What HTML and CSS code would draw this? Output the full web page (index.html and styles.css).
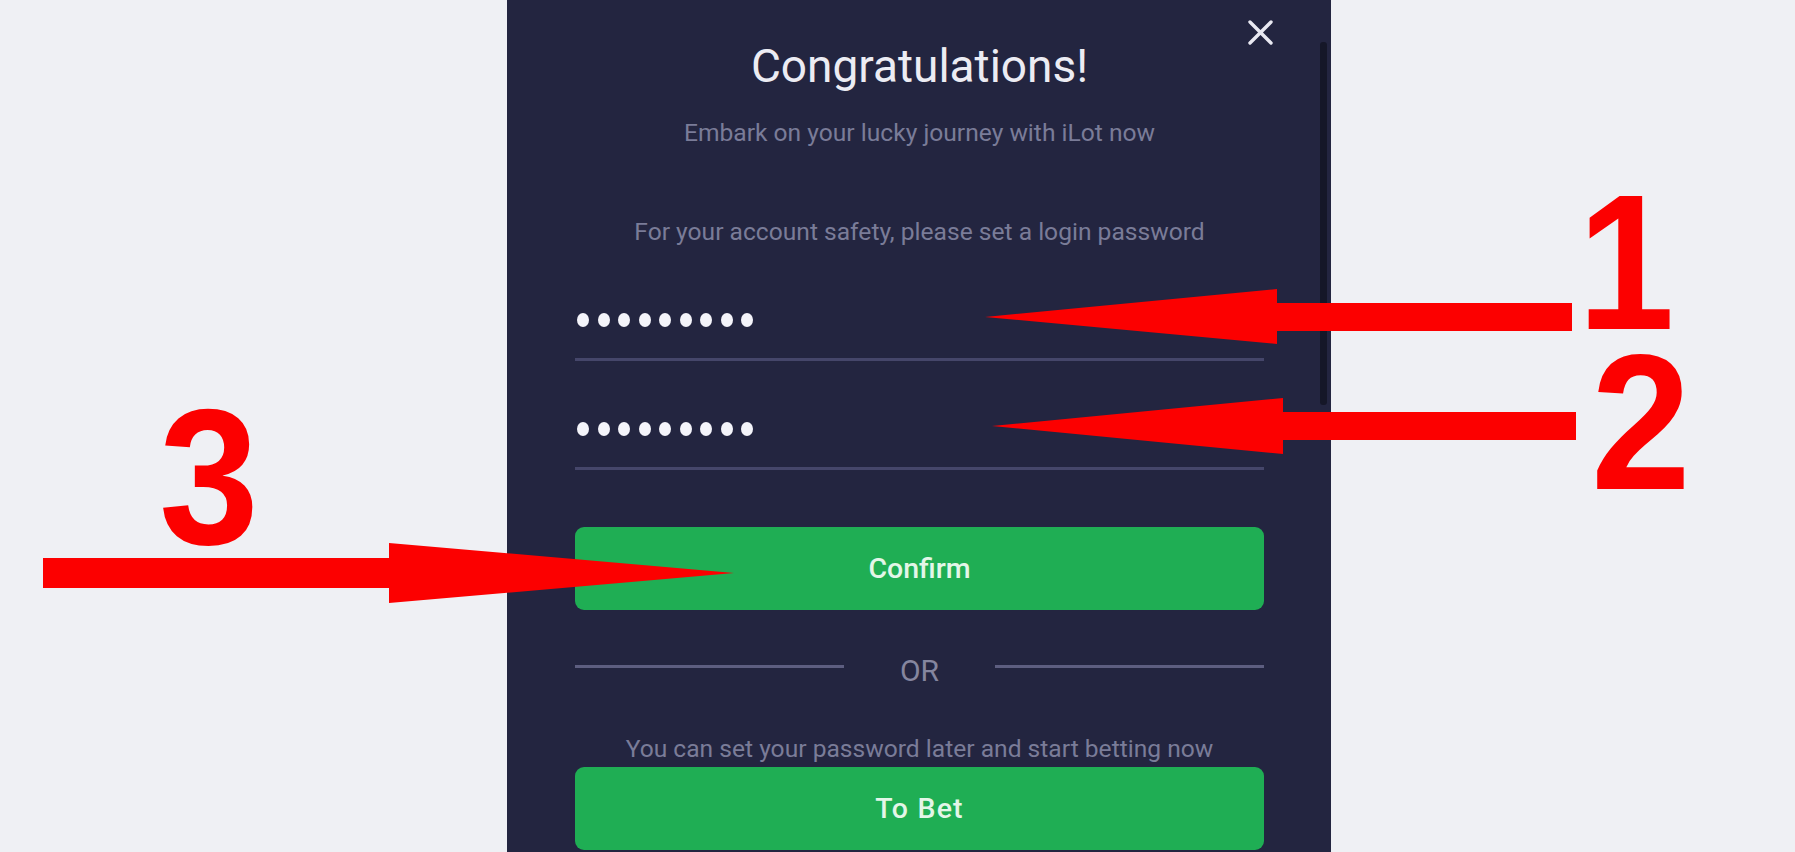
FILE: index.html
```html
<!DOCTYPE html>
<html lang="en">
<head>
    <meta charset="UTF-8">
    <meta name="viewport" content="width=device-width, initial-scale=1.0">
    <title>Set Password</title>
    <link rel="stylesheet" href="styles.css">
</head>
<body>

    <div class="panel">
        <!-- close button -->
        <button class="close" aria-label="Close">
            <svg width="27" height="25" viewBox="0 0 27 25">
                <path d="M3 2 L24 23 M24 2 L3 23" stroke="#e9e9f2" stroke-width="3.4" stroke-linecap="round"/>
            </svg>
        </button>
        <div class="scrollbar"></div>

        <h1 class="title">Congratulations!</h1>
        <p class="note">Embark on your lucky journey with iLot now</p>
        <p class="note hint">For your account safety, please set a login password</p>

        <!-- password fields -->
        <div class="field">
            <div class="dots">
                <span></span><span></span><span></span><span></span><span></span><span></span><span></span><span></span><span></span>
            </div>
        </div>
        <div class="field field-second">
            <div class="dots">
                <span></span><span></span><span></span><span></span><span></span><span></span><span></span><span></span><span></span>
            </div>
        </div>

        <button class="btn btn-confirm">Confirm</button>

        <div class="or-row"><span>OR</span></div>

        <p class="note later">You can set your password later and start betting now</p>
        <button class="btn btn-bet">To Bet</button>
    </div>

    <!-- red annotations drawn on top of the screenshot -->
    <svg class="marks" width="1795" height="852" viewBox="0 0 1795 852">
        <g fill="#fc0000">
            <polygon points="985,317 1277,289 1277,303 1572,303 1572,331 1277,331 1277,344"/>
            <polygon points="992,426 1283,398 1283,412 1576,412 1576,440 1283,440 1283,454"/>
            <polygon points="734,573 389,543 389,558 43,558 43,588 389,588 389,603"/>
            <text x="1626" y="329" text-anchor="middle" class="num" transform="translate(1626 0) scale(0.9 1) translate(-1626 0)">1</text>
            <text x="1641" y="489" text-anchor="middle" class="num" transform="translate(1641 0) scale(0.93 1) translate(-1641 0)">2</text>
            <text x="209" y="544" text-anchor="middle" class="num" transform="translate(209 0) scale(0.93 1) translate(-209 0)">3</text>
        </g>
    </svg>

</body>
</html>
```

FILE: styles.css
```css
body {
    margin: 0;
    position: relative;
    height: 852px;
    overflow: hidden;
    background-color: #eff0f4;
    font-family: Roboto, 'Liberation Sans', sans-serif;
}
.panel {
    position: relative;
    box-sizing: border-box;
    width: 824px;
    height: 852px;
    margin-left: 507px;
    padding: 40px 67px 0 68px;
    background-color: #232540;
    overflow: hidden;
}
.close {
    position: absolute;
    top: 20px;
    left: 740px;
    width: 27px;
    height: 25px;
    padding: 0;
    border: 0;
    background: none;
    cursor: pointer;
}
.close svg {
    display: block;
}
.scrollbar {
    position: absolute;
    top: 42px;
    right: 4px;
    width: 7px;
    height: 363px;
    border-radius: 3px;
    background-color: #151728;
}
.title {
    margin: 0;
    font-size: 46px;
    line-height: 52px;
    font-weight: 400;
    text-align: center;
    color: #ececf3;
}
.note {
    margin: 26px 0 0;
    font-size: 24.6px;
    line-height: 30px;
    text-align: center;
    color: #7a7c98;
}
.hint {
    margin-top: 69px;
}
.field {
    margin-top: 43px;
    padding: 23px 0 31px 2px;
    border-bottom: 3px solid #45466a;
}
.field-second {
    margin-top: 38px;
}
.dots {
    display: flex;
    gap: 8.5px;
}
.dots span {
    width: 12px;
    height: 14px;
    border-radius: 50%;
    background-color: #f4f4fa;
}
.btn {
    display: block;
    width: 100%;
    height: 83px;
    border: 0;
    border-radius: 9px;
    background-color: #1fae54;
    color: #e3f6e8;
    font-family: Roboto, 'Liberation Sans', sans-serif;
    font-size: 28.5px;
    font-weight: 500;
    cursor: pointer;
}
.btn-confirm {
    margin-top: 57px;
}
.btn-bet {
    margin-top: 3px;
    letter-spacing: 1.2px;
}
.or-row {
    display: flex;
    align-items: center;
    gap: 56px;
    margin-top: 31px;
    height: 50px;
}
.or-row::before,
.or-row::after {
    content: "";
    flex: 1;
    height: 3px;
    background-color: #5d5e80;
}
.or-row span {
    padding-top: 10px;
    font-size: 30px;
    line-height: 40px;
    color: #85869f;
}
.later {
    margin-top: 43px;
}
.marks {
    position: absolute;
    top: 0;
    left: 0;
    pointer-events: none;
}
.num {
    font-family: 'Liberation Sans', Arial, sans-serif;
    font-size: 193px;
    font-weight: 700;
}
```
